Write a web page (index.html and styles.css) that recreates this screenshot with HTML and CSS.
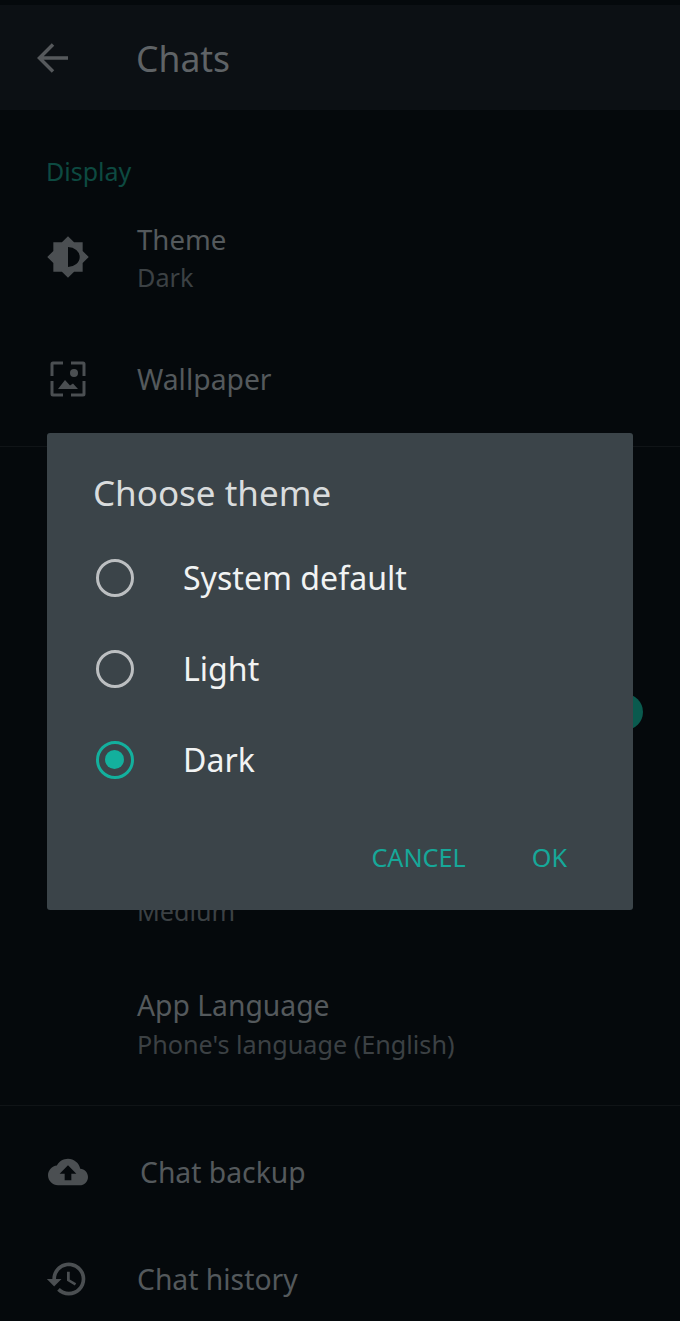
FILE: index.html
```html
<!DOCTYPE html>
<html lang="en">
<head>
  <meta charset="UTF-8" />
  <meta name="viewport" content="width=device-width, initial-scale=1.0"/>
  <title>Chats</title>
  <link rel="stylesheet" href="styles.css">
</head>
<body>
  <div class="screen">
    <header class="appbar">
      <svg class="back" viewBox="0 0 32 32"><path d="M31 16H3M16 2.5 2.5 16 16 29.5"/></svg>
      <h1>Chats</h1>
    </header>

    <section class="group">
      <h2 class="group-title">Display</h2>
      <div class="row row-theme">
        <svg class="icon" viewBox="0 0 24 24"><path fill-rule="evenodd" d="M20 8.69V4h-4.69L12 .69 8.69 4H4v4.69L.69 12 4 15.31V20h4.69L12 23.31 15.31 20H20v-4.69L23.31 12zM12 6.6a6.4 5.4 0 0 1 0 10.8z"/></svg>
        <div class="text">
          <div class="label">Theme</div>
          <div class="sub">Dark</div>
        </div>
      </div>
      <div class="row row-wallpaper">
        <svg class="icon" viewBox="0 0 42 42">
          <path class="frame" d="M16 5H6a1 1 0 0 0-1 1v12M24 5h12a1 1 0 0 1 1 1v12M16 37H6a1 1 0 0 1-1-1V23M24 37h12a1 1 0 0 0 1-1V23"/>
          <circle cx="27" cy="15" r="4"/>
          <path d="m11 31 7-9 5 5.5 3-2 5 5.5z"/>
        </svg>
        <div class="text">
          <div class="label">Wallpaper</div>
        </div>
      </div>
    </section>

    <section class="group group-chats">
      <div class="row row-media">
        <div class="text">
          <div class="label">Media visibility</div>
        </div>
        <span class="thumb"></span>
      </div>
      <div class="row row-font">
        <div class="text">
          <div class="label">Font size</div>
          <div class="sub">Medium</div>
        </div>
      </div>
      <div class="row row-lang">
        <div class="text">
          <div class="label">App Language</div>
          <div class="sub">Phone's language (English)</div>
        </div>
      </div>
    </section>

    <section class="group group-last">
      <div class="row row-backup">
        <svg class="icon" viewBox="0 0 24 24"><path fill-rule="evenodd" d="M19.35 10.04C18.67 6.59 15.64 4 12 4 9.11 4 6.6 5.64 5.35 8.04 2.34 8.36 0 10.91 0 14c0 3.31 2.69 6 6 6h13c2.76 0 5-2.24 5-5 0-2.64-2.05-4.78-4.65-4.96zM14 13v4h-4v-4H7l5-5 5 5h-3z"/></svg>
        <div class="text">
          <div class="label">Chat backup</div>
        </div>
      </div>
      <div class="row row-history">
        <svg class="icon" viewBox="0 0 24 24"><path d="M13 3c-4.97 0-9 4.03-9 9H1l3.89 3.89.07.14L9 12H6c0-3.87 3.13-7 7-7s7 3.13 7 7-3.13 7-7 7c-1.93 0-3.68-.79-4.94-2.06l-1.42 1.42C8.27 19.99 10.51 21 13 21c4.97 0 9-4.03 9-9s-4.03-9-9-9zm-1 5v5l4.28 2.54.72-1.21-3.5-2.08V8H12z"/></svg>
        <div class="text">
          <div class="label">Chat history</div>
        </div>
      </div>
    </section>

    <!-- Theme dialog -->
    <div class="dialog">
      <h2>Choose theme</h2>
      <ul class="options">
        <li><span class="radio"></span>System default</li>
        <li><span class="radio"></span>Light</li>
        <li><span class="radio checked"></span>Dark</li>
      </ul>
      <div class="actions">
        <button>CANCEL</button>
        <button>OK</button>
      </div>
    </div>
  </div>
</body>
</html>
```

FILE: styles.css
```css
* { box-sizing: border-box; margin: 0; padding: 0; }
body {
  font-family: 'Noto Sans', sans-serif;
  background: #05090c;
  color: #5b6063;
}
.screen {
  position: relative;
  width: 680px;
  height: 1321px;
  overflow: hidden;
  background: #05090c;
  padding-top: 5px;
}
.appbar {
  height: 105px;
  background: #0c1014;
  display: flex;
  align-items: center;
  padding-left: 37px;
}
.back {
  width: 32px;
  height: 32px;
  margin-right: 67px;
  fill: none;
  stroke: #56595c;
  stroke-width: 3.5;
}
.appbar h1 {
  font-size: 35.5px;
  line-height: 48px;
  font-weight: 400;
  color: #5f6366;
}
.group-title {
  height: 87px;
  padding: 43px 0 0 46px;
  font-size: 25px;
  line-height: 36px;
  font-weight: 400;
  color: #0d4a41;
}
.row {
  display: flex;
  align-items: center;
  padding-left: 137px;
  position: relative;
}
.icon {
  position: absolute;
  left: 47px;
  width: 42px;
  height: 42px;
  fill: #4b4f52;
}
.frame {
  fill: none;
  stroke: #4b4f52;
  stroke-width: 3;
}
.label {
  font-size: 28.3px;
  line-height: 39px;
  color: #54595c;
}
.sub {
  font-size: 25.2px;
  line-height: 39px;
  color: #3c4144;
}
.row-theme { height: 122px; }
.row-theme .icon {
  left: 46px;
  width: 44px;
  height: 44px;
  margin-top: -3px;
}
.row-theme .label { font-size: 27.6px; line-height: 38px; }
.row-wallpaper { height: 120px; }
.group-chats {
  margin-top: 7px;
  padding-top: 207px;
  border-top: 1px solid #101417;
  height: 659px;
}
.row-media { height: 116px; }
.thumb {
  position: absolute;
  left: 607px;
  top: 40px;
  width: 36px;
  height: 36px;
  border-radius: 50%;
  background: #0a5a4e;
}
.row-font {
  height: 120px;
  margin-top: 62px;
}
.row-lang { height: 145px; }
.group-last {
  border-top: 1px solid #101417;
}
.row-backup {
  height: 132px;
  padding-left: 140px;
}
.row-history { height: 82px; }
.row-backup .icon { left: 48px; width: 40px; height: 40px; }
.row-history .icon { left: 45px; width: 44px; height: 44px; }
.dialog {
  position: absolute;
  left: 47px;
  top: 433px;
  width: 586px;
  height: 477px;
  background: #3b4449;
  border-radius: 3px;
  padding: 36px 46px 0;
}
.dialog h2 {
  font-size: 35px;
  line-height: 48px;
  font-weight: 400;
  color: #d9dcdd;
}
.options {
  list-style: none;
  margin-top: 15px;
}
.options li {
  height: 91px;
  display: flex;
  align-items: center;
  gap: 49px;
  padding-left: 3px;
  font-size: 32.1px;
  color: #f1f3f3;
}
.radio {
  position: relative;
  width: 38px;
  height: 38px;
  border: 3.5px solid #bcbfc1;
  border-radius: 50%;
}
.radio.checked { border-color: #13b09d; }
.radio.checked::after {
  content: "";
  position: absolute;
  left: 6px;
  top: 6px;
  width: 19px;
  height: 19px;
  border-radius: 50%;
  background: #13b09d;
}
.actions {
  display: flex;
  justify-content: flex-end;
  gap: 66px;
  margin: 34px 20px 0 0;
}
.actions button {
  font-family: inherit;
  font-size: 25.2px;
  line-height: 36px;
  color: #16a899;
  background: none;
  border: none;
}
```
